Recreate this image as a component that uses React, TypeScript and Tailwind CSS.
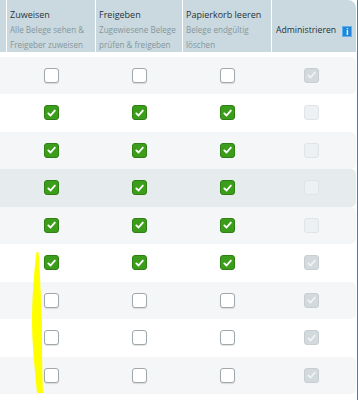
import React from 'react';

type Box = 'on' | 'off' | 'lockedOn' | 'lockedOff';

const rows: Box[][] = [
  ['off', 'off', 'off', 'lockedOn'],
  ['on', 'on', 'on', 'lockedOff'],
  ['on', 'on', 'on', 'lockedOff'],
  ['on', 'on', 'on', 'lockedOff'],
  ['on', 'on', 'on', 'lockedOff'],
  ['on', 'on', 'on', 'lockedOn'],
  ['off', 'off', 'off', 'lockedOn'],
  ['off', 'off', 'off', 'lockedOn'],
  ['off', 'off', 'off', 'lockedOn'],
];

const headers = [
  { title: 'Zuweisen', lines: ['Alle Belege sehen &', 'Freigeber zuweisen'] },
  { title: 'Freigeben', lines: ['Zugewiesene Belege', 'prüfen & freigeben'] },
  { title: 'Papierkorb leeren', lines: ['Belege endgültig', 'löschen'] },
];

const Check = ({ color }: { color: string }) => (
  <svg viewBox="0 0 14 14" className="w-[14px] h-[14px]">
    <path d="M3.6 7.4 L6 9.7 L10.6 4.4" fill="none" stroke={color} strokeWidth="2" strokeLinecap="round" strokeLinejoin="round" />
  </svg>
);

const Checkbox = ({ state }: { state: Box }) => {
  if (state === 'on') {
    return (
      <div className="w-[15px] h-[15px] rounded-[3px] bg-[#3c9d1b] border border-[#2f8014] flex items-center justify-center">
        <Check color="#ffffff" />
      </div>
    );
  }
  if (state === 'lockedOn') {
    return (
      <div className="w-[15px] h-[15px] rounded-[3px] bg-[#d3dadd] border border-[#c6ced2] flex items-center justify-center">
        <Check color="#eef2f3" />
      </div>
    );
  }
  if (state === 'lockedOff') {
    return <div className="w-[15px] h-[15px] rounded-[3px] bg-[#eef1f3] border border-[#dfe4e7]" />;
  }
  return <div className="w-[15px] h-[15px] rounded-[3px] bg-white border border-[#9fa8ad] shadow-[0_1px_1px_rgba(0,0,0,0.12)]" />;
};

const rowBg = (i: number) => {
  if (i === 3) return 'bg-[#e6ebed]';
  return i % 2 === 0 ? 'bg-[#f4f6f8]' : 'bg-white';
};

export default function App() {
  return (
    <div className="relative w-[358px] h-[400px] bg-white overflow-hidden border-r border-[#3f8a8e]" style={{ fontFamily: '"Open Sans", "Noto Sans", sans-serif' }}>
      <div className="grid grid-cols-[6px_88px_86px_88px_84px] gap-x-px w-[356px] h-[52px]">
        <div className="bg-[#cad9df]" />
        {headers.map((h) => (
          <div key={h.title} className="bg-[#cad9df] pl-[3px] pt-[8px]">
            <div className="text-[9px] leading-[14px] text-[#27333a] whitespace-nowrap">{h.title}</div>
            {h.lines.map((l) => (
              <div key={l} className="text-[8.1px] leading-[15px] text-[#84969c] whitespace-nowrap">{l}</div>
            ))}
          </div>
        ))}
        <div className="bg-[#cad9df] rounded-tr-[8px] pl-[4px] pt-[10px] flex items-center gap-[6px]">
          <span className="text-[8.7px] text-[#27333a] whitespace-nowrap">Administrieren</span>
          <span className="w-[10px] h-[11px] bg-[#1e86d6] border border-[#62b0ee] text-white text-[8px] font-bold leading-[9px] flex items-center justify-center">i</span>
        </div>
      </div>

      <div className="mt-[4.5px] w-[356px]">
        {rows.map((r, i) => (
          <div key={i} className={`grid grid-cols-[6px_88px_86px_88px_84px] gap-x-px h-[37.5px] items-center rounded-r-[5px] ${rowBg(i)}`}>
            <div />
            {r.map((s, j) => (
              <div key={j} className={`flex justify-center ${j === 3 ? 'pr-[6px]' : ''}`}>
                <Checkbox state={s} />
              </div>
            ))}
          </div>
        ))}
      </div>

      <svg className="absolute left-0 top-0 w-[358px] h-[400px] pointer-events-none" viewBox="0 0 358 400">
        <path d="M36.5 252 C34 270 32 300 32 322 C32 345 35 370 37 393 L43 393 C42 370 42 345 42 322 C41 300 40 270 38.5 252 Z" fill="#ffff00" />
      </svg>
    </div>
  );
}
